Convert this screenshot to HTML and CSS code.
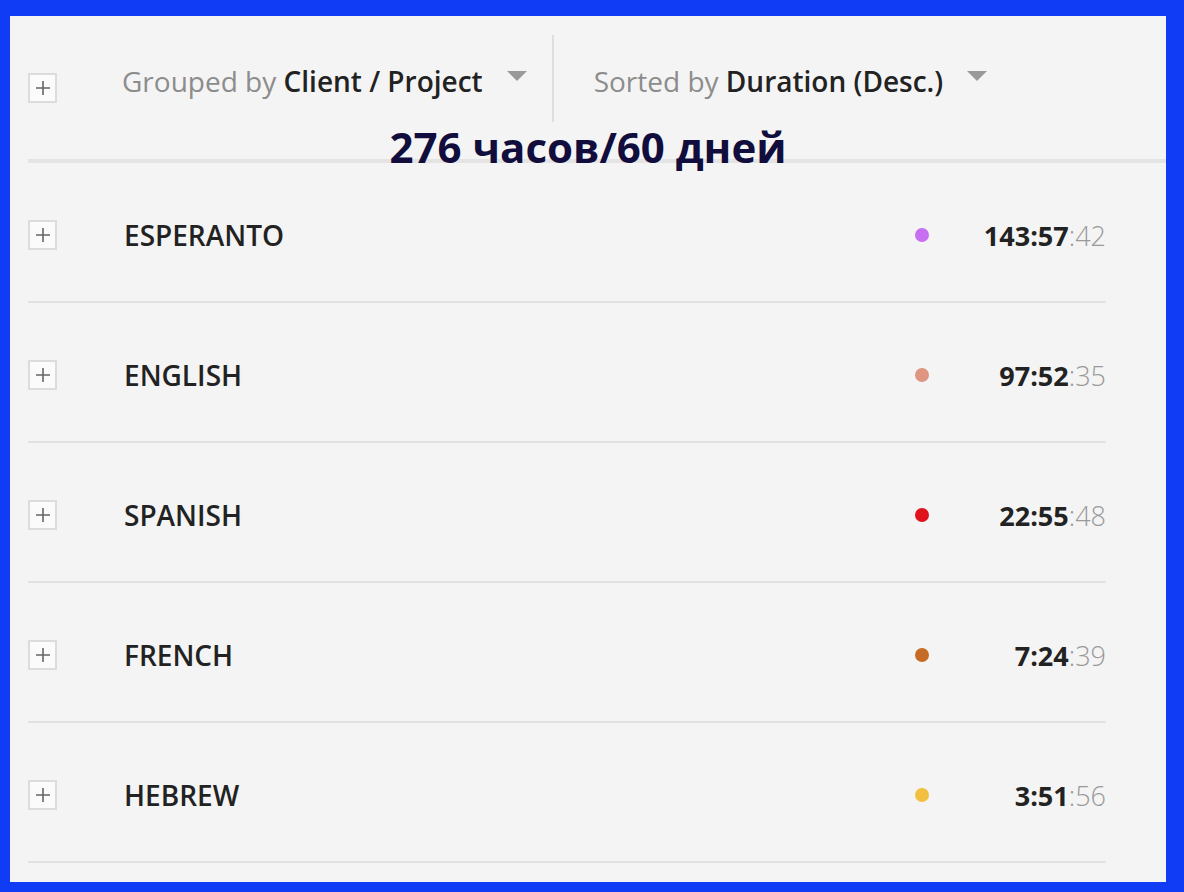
FILE: index.html
```html
<!DOCTYPE html>
<html lang="en">
<head>
<meta charset="utf-8">
<title>Report</title>
<link rel="stylesheet" href="styles.css">
</head>
<body>
<div class="panel">
  <div class="header">
    <div class="toolbar">
      <span class="plus-box header-plus"><svg viewBox="0 0 14 14" width="14" height="14"><path d="M7 0V14M0 7H14" stroke="#666" stroke-width="1.6" fill="none"/></svg></span>
      <div class="control group-control">
        <span class="control-text"><span class="muted">Grouped by</span> <span class="strong">Client / Project</span></span>
        <span class="caret"></span>
      </div>
      <div class="divider"></div>
      <div class="control sort-control">
        <span class="control-text"><span class="muted">Sorted by</span> <span class="strong">Duration (Desc.)</span></span>
        <span class="caret"></span>
      </div>
    </div>
    <div class="title">276 часов/60 дней</div>
  </div>
  <div class="rows">
    <div class="row">
      <span class="plus-box"><svg viewBox="0 0 14 14" width="14" height="14"><path d="M7 0V14M0 7H14" stroke="#666" stroke-width="1.6" fill="none"/></svg></span>
      <span class="label">ESPERANTO</span>
      <span class="dot" style="background:#c86ef0"></span>
      <span class="time"><b>143:57</b><i>:42</i></span>
    </div>
    <div class="row">
      <span class="plus-box"><svg viewBox="0 0 14 14" width="14" height="14"><path d="M7 0V14M0 7H14" stroke="#666" stroke-width="1.6" fill="none"/></svg></span>
      <span class="label">ENGLISH</span>
      <span class="dot" style="background:#de9683"></span>
      <span class="time"><b>97:52</b><i>:35</i></span>
    </div>
    <div class="row">
      <span class="plus-box"><svg viewBox="0 0 14 14" width="14" height="14"><path d="M7 0V14M0 7H14" stroke="#666" stroke-width="1.6" fill="none"/></svg></span>
      <span class="label">SPANISH</span>
      <span class="dot" style="background:#e0121c"></span>
      <span class="time"><b>22:55</b><i>:48</i></span>
    </div>
    <div class="row">
      <span class="plus-box"><svg viewBox="0 0 14 14" width="14" height="14"><path d="M7 0V14M0 7H14" stroke="#666" stroke-width="1.6" fill="none"/></svg></span>
      <span class="label">FRENCH</span>
      <span class="dot" style="background:#c56b26"></span>
      <span class="time"><b>7:24</b><i>:39</i></span>
    </div>
    <div class="row">
      <span class="plus-box"><svg viewBox="0 0 14 14" width="14" height="14"><path d="M7 0V14M0 7H14" stroke="#666" stroke-width="1.6" fill="none"/></svg></span>
      <span class="label">HEBREW</span>
      <span class="dot" style="background:#f1c040"></span>
      <span class="time"><b>3:51</b><i>:56</i></span>
    </div>
  </div>
</div>
</body>
</html>
```

FILE: styles.css
```css
* { box-sizing: border-box; }
html, body { margin: 0; padding: 0; }
body {
  width: 1184px;
  height: 892px;
  background: #113cf6;
  padding: 16px 18px 10px 10px;
  font-family: "Open Sans", "Noto Sans", sans-serif;
  overflow: hidden;
}
.panel {
  height: 866px;
  background: #f4f4f4;
  padding-left: 18px;
  overflow: hidden;
}
.header {
  position: relative;
  height: 147px;
  border-bottom: 4px solid #e4e4e4;
  padding-top: 19px;
}
.toolbar {
  display: flex;
  align-items: center;
  height: 87px;
}
.plus-box {
  flex: none;
  width: 29px;
  height: 30px;
  border: 2px solid #dcdcdc;
  background: #fbfbfb;
  display: flex;
  align-items: center;
  justify-content: center;
}
.header-plus {
  margin-top: 18px;
  margin-right: 65px;
}
.control {
  display: flex;
  align-items: center;
  font-size: 28px;
  color: #222;
  line-height: 1;
  margin-top: 4px;
}
.control-text { white-space: nowrap; }
.muted { color: #8c8c8c; }
.strong { font-weight: 600; color: #222; }
.caret {
  width: 0;
  height: 0;
  border-left: 10px solid transparent;
  border-right: 10px solid transparent;
  border-top: 10px solid #999;
  margin-left: 24px;
  margin-top: -10px;
}
.divider {
  width: 2px;
  height: 87px;
  background: #dedede;
  margin: 0 40px 0 25px;
}
.title {
  position: absolute;
  left: -18px;
  right: 0;
  top: 106px;
  text-align: center;
  font-size: 42px;
  font-weight: 700;
  color: #110d3c;
  line-height: 1.2;
}
.rows {
  margin-right: 60px;
}
.row {
  display: flex;
  align-items: center;
  height: 140px;
  border-bottom: 2px solid #e2e2e2;
  padding-top: 6px;
}
.row .plus-box { margin-right: 67px; }
.label {
  flex: 1;
  font-size: 28px;
  font-weight: 600;
  color: #222;
}
.dot {
  flex: none;
  width: 14px;
  height: 14px;
  border-radius: 50%;
}
.time {
  flex: none;
  width: 177px;
  text-align: right;
  font-size: 27px;
  color: #222;
}
.time b { font-weight: 700; }
.time i { font-style: normal; font-weight: 300; color: #9a9a9a; }
```
